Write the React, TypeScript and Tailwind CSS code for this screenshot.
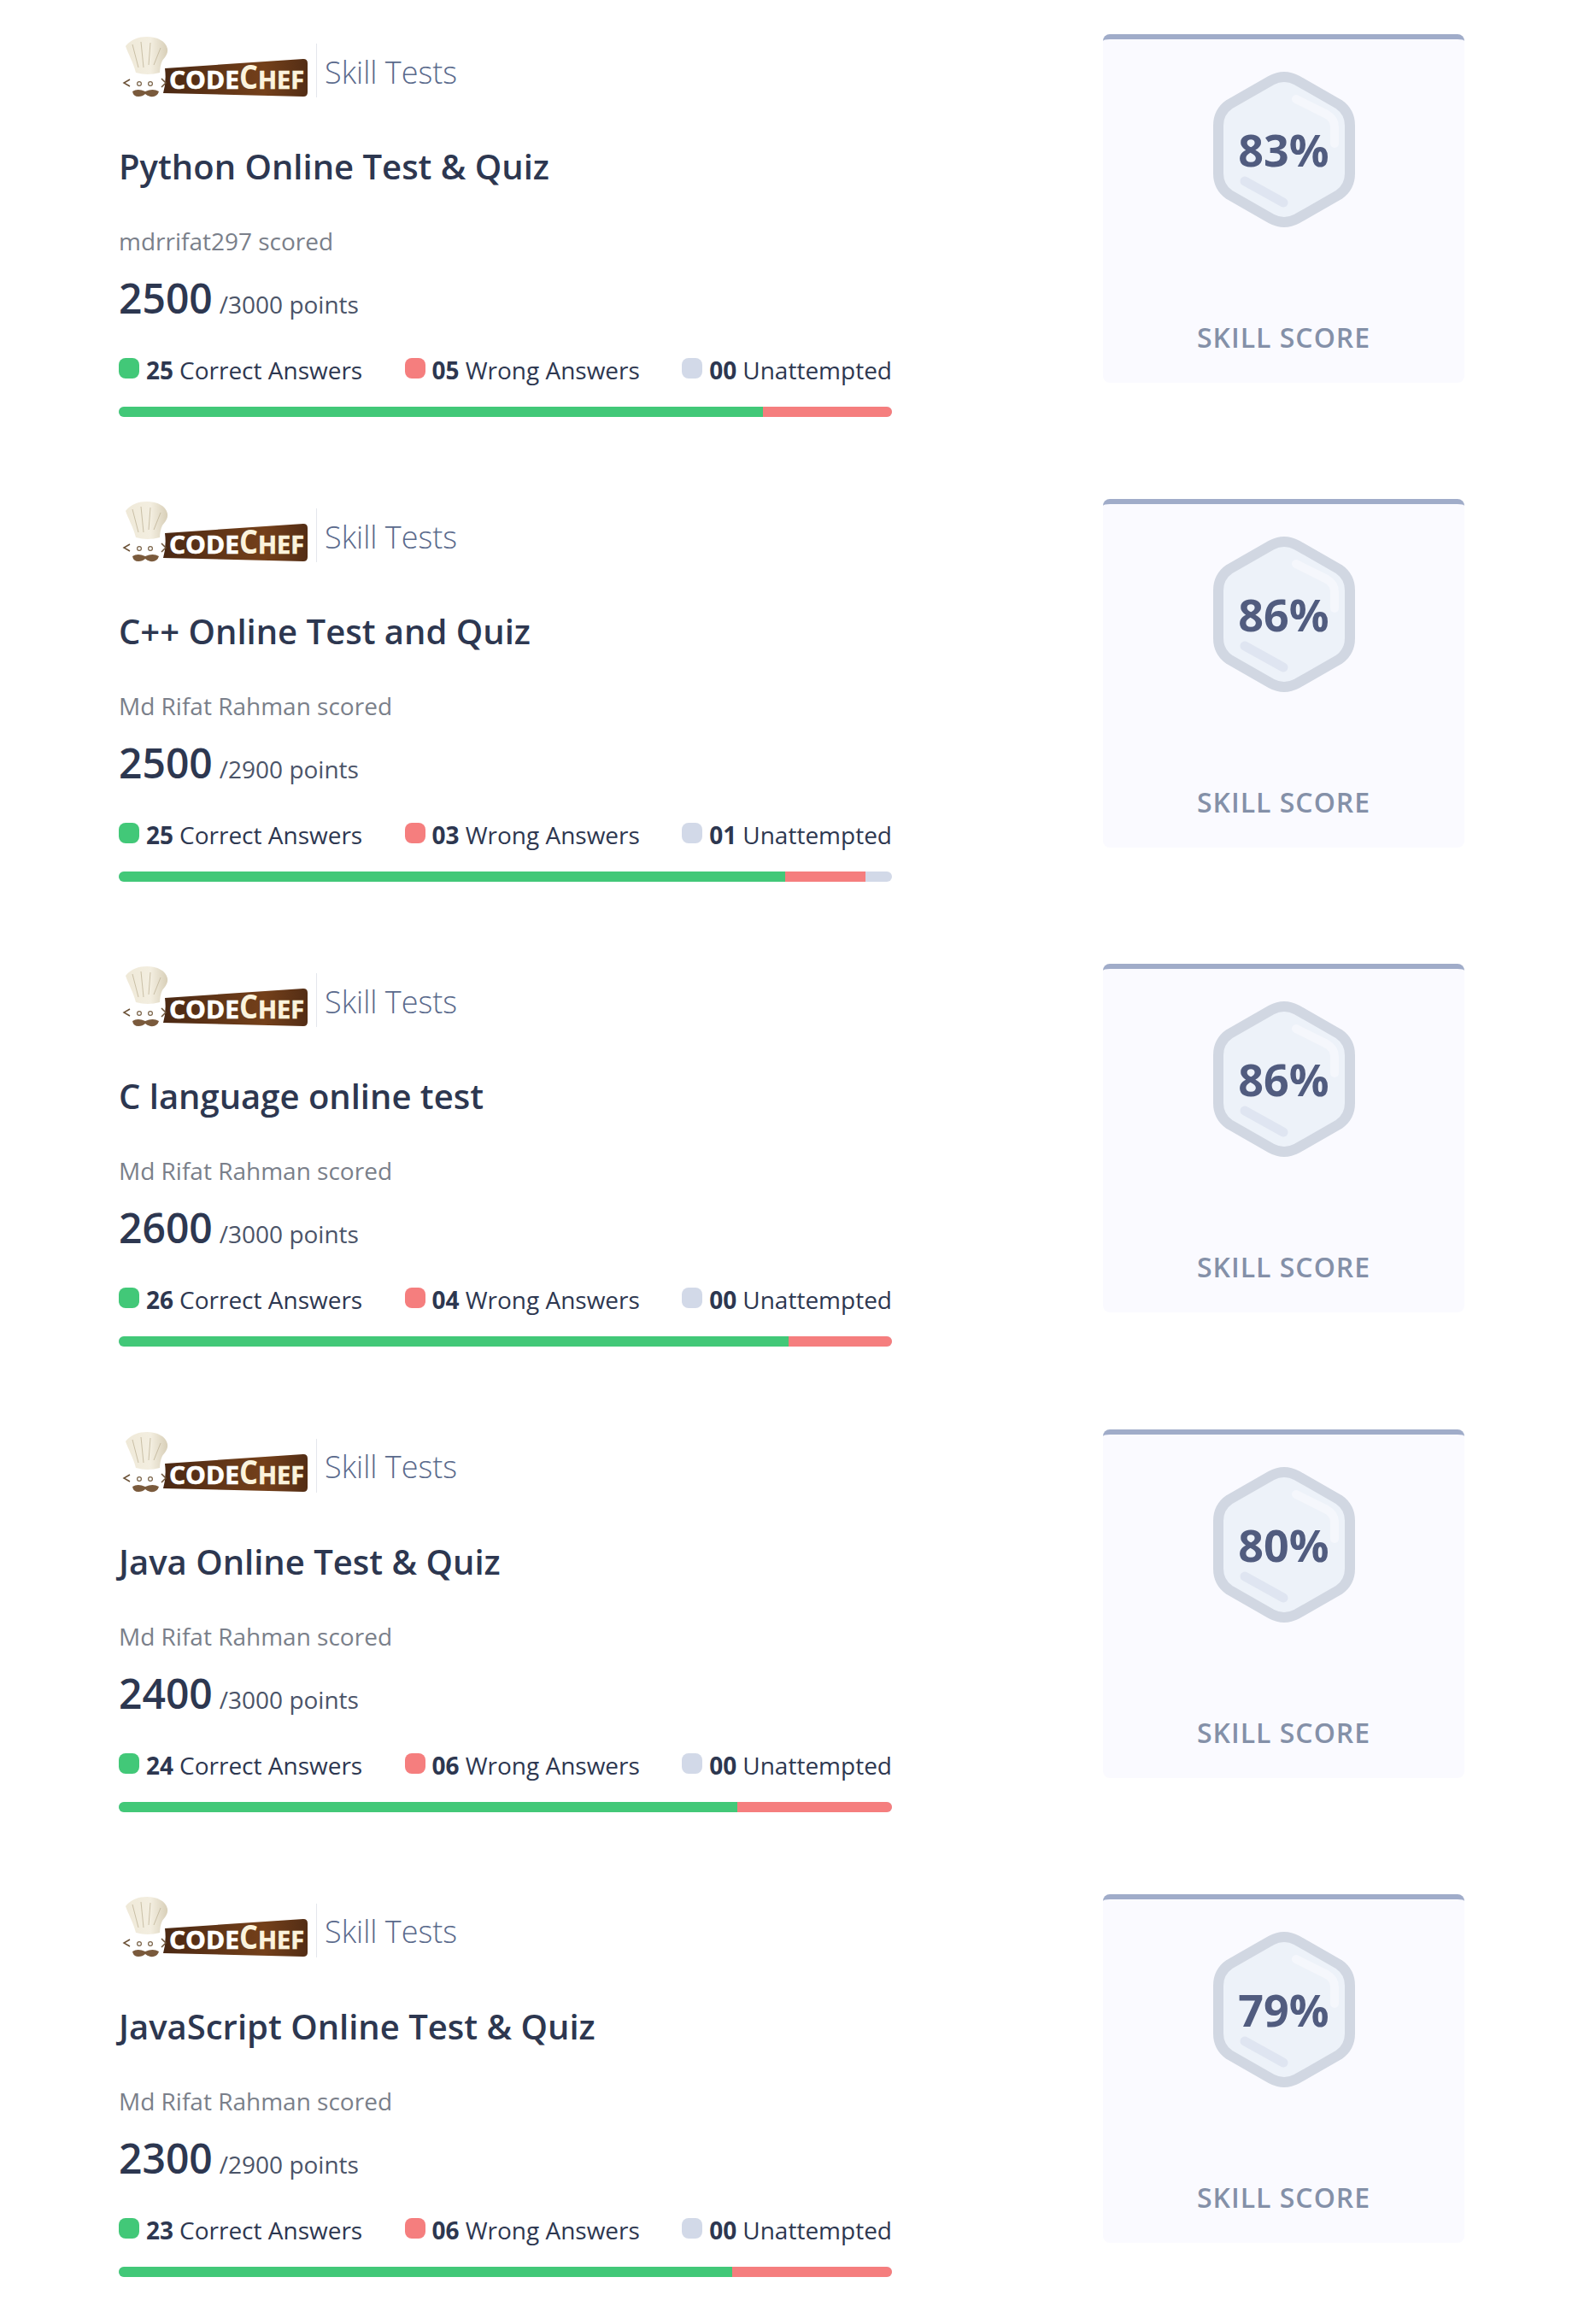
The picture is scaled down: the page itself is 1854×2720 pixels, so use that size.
const tests = [
  { title: 'Python Online Test & Quiz', user: 'mdrrifat297', score: 2500, total: 3000, correct: 25, wrong: 5, skipped: 0, pct: 83 },
  { title: 'C++ Online Test and Quiz', user: 'Md Rifat Rahman', score: 2500, total: 2900, correct: 25, wrong: 3, skipped: 1, pct: 86 },
  { title: 'C language online test', user: 'Md Rifat Rahman', score: 2600, total: 3000, correct: 26, wrong: 4, skipped: 0, pct: 86 },
  { title: 'Java Online Test & Quiz', user: 'Md Rifat Rahman', score: 2400, total: 3000, correct: 24, wrong: 6, skipped: 0, pct: 80 },
  { title: 'JavaScript Online Test & Quiz', user: 'Md Rifat Rahman', score: 2300, total: 2900, correct: 23, wrong: 6, skipped: 0, pct: 79 },
];

const pad = (n: number) => String(n).padStart(2, '0');

function Logo({ id }: { id: number }) {
  return (
    <svg width="219" height="71" viewBox="0 0 219 71" className="block shrink-0 overflow-visible">
      <defs>
        <linearGradient id={`banner-${id}`} x1="0" x2="1" y1="0" y2="0">
          <stop offset="0" stopColor="#4a2813" />
          <stop offset="0.7" stopColor="#74401a" />
          <stop offset="1" stopColor="#532d15" />
        </linearGradient>
        <linearGradient id={`hat-${id}`} x1="0" x2="1" y1="0" y2="0">
          <stop offset="0" stopColor="#efe9d8" />
          <stop offset="0.6" stopColor="#f3eee0" />
          <stop offset="1" stopColor="#d8cfb8" />
        </linearGradient>
      </defs>
      {/* banner */}
      <path d="M50 37 L212 26 Q217 26 217 31 L217 65 Q217 70 212 70 L48 66 Q52 52 50 37 Z" fill={`url(#banner-${id})`} />
      {/* hat */}
      <path d="M4 11 C10 3 20 0 29 0 C41 0 51 5 53 14 C54 20 50 24 47 28 C45 32 44 38 44 42 Q30 46 16 42 C13 30 7 20 4 11 Z" fill={`url(#hat-${id})`} />
      <path d="M12 9 L19 36 M22 6 L25 36 M33 7 L31 33 M45 13 L37 33" stroke="#bfb498" strokeWidth="0.8" fill="none" />
      {/* face */}
      <path d="M9 50 L2 54 L9 58 M46 49 L51 54 L46 59" stroke="#6b5136" strokeWidth="1.5" fill="none" />
      <circle cx="20" cy="55" r="2.4" fill="none" stroke="#7a6348" strokeWidth="1.2" />
      <circle cx="33" cy="55" r="2.4" fill="none" stroke="#7a6348" strokeWidth="1.2" />
      <path d="M12 64 Q18 60 27 64 Q36 60 43 64 Q41 71 33 70 Q29 69 27 67 Q24 70 19 70 Q13 70 12 64 Z" fill="#7a5a3c" />
      {/* wordmark */}
      <text x="55" y="61" textLength="82" lengthAdjust="spacingAndGlyphs" fontFamily="'Open Sans', sans-serif" fontWeight="700" fontSize="28" fill="#ffffff" stroke="#ffffff" strokeWidth="0.6">
        CODE
      </text>
      <text x="137" y="61" textLength="22" lengthAdjust="spacingAndGlyphs" fontFamily="'Open Sans', sans-serif" fontWeight="700" fontSize="40" fill="#fbf3dc">
        C
      </text>
      <text x="159" y="61" textLength="54" lengthAdjust="spacingAndGlyphs" fontFamily="'Open Sans', sans-serif" fontWeight="700" fontSize="28" fill="#fbf3dc" stroke="#fbf3dc" strokeWidth="0.6">
        HEF
      </text>
    </svg>
  );
}

function Badge({ pct }: { pct: number }) {
  return (
    <div className="relative mx-auto h-[184px] w-[166px]">
      <svg width="166" height="184" viewBox="0 0 166 184" className="block">
        <path
          d="M68 11 Q83 3 98 11 L147 39 Q160 48 160 64 L160 120 Q160 136 147 145 L98 173 Q83 181 68 173 L19 145 Q6 136 6 120 L6 64 Q6 48 19 39 Z"
          fill="#edf2f9"
          stroke="#d1d7e2"
          strokeWidth="12"
        />
        <path d="M97 33 L133 51 Q142 56 142 66 L142 85" fill="none" stroke="#f5f7fc" strokeWidth="10" strokeLinecap="round" />
        <path d="M37 129 L82 154" fill="none" stroke="#dfe5f1" strokeWidth="11" strokeLinecap="round" />
      </svg>
      <div className="absolute inset-0 flex items-center justify-center text-[52px] font-bold text-[#515c7f]">{pct}%</div>
    </div>
  );
}

function Legend({ color, count, label }: { color: string; count: number; label: string }) {
  return (
    <div className="flex items-center text-[#2d3750]">
      <span className={`mr-2 h-6 w-6 -translate-y-0.5 rounded-lg ${color}`} />
      <span className="mr-[7px] font-bold">{pad(count)}</span>
      <span>{label}</span>
    </div>
  );
}

export default function App() {
  return (
    <div className="min-h-[2720px] bg-white pl-[139px] font-['Open_Sans',sans-serif]">
      {tests.map((t, i) => {
        const sum = t.correct + t.wrong + t.skipped;
        return (
          <div key={t.title} className="flex h-[544.2px] pt-10">
            <div className="w-[905px]">
              <div className="flex h-[71px] translate-y-[3px] items-start pl-1">
                <Logo id={i} />
                <div className="ml-2 mt-2 flex h-[63px] items-center border-l border-[#e4e7ec] pl-[9px] pt-1 text-[36px] font-light text-[#5a6a8c]">
                  Skill Tests
                </div>
              </div>
              <h3 className="mt-[56px] text-[40px] leading-[56px] font-semibold text-[#2d3750]">{t.title}</h3>
              <p className="mt-[41px] text-[28px] leading-9 text-[#7a7f8a]">{t.user} scored</p>
              <div className="mt-[15px] flex items-baseline text-[#2d3750]">
                <span className="text-[48px] leading-[68px] font-semibold">{t.score}</span>
                <span className="ml-2 text-[28px] font-normal text-[#4b5468]">/{t.total} points</span>
              </div>
              <div className="mt-[32px] flex justify-between text-[28px] leading-9">
                <Legend color="bg-[#42c878]" count={t.correct} label="Correct Answers" />
                <Legend color="bg-[#f57e7e]" count={t.wrong} label="Wrong Answers" />
                <Legend color="bg-[#d2d9e8]" count={t.skipped} label="Unattempted" />
              </div>
              <div className="mt-[25px] flex h-3 overflow-hidden rounded-md bg-[#d2d9e8]">
                <div className="bg-[#42c878]" style={{ width: `${(t.correct / sum) * 100}%` }} />
                <div className="bg-[#f57e7e]" style={{ width: `${(t.wrong / sum) * 100}%` }} />
              </div>
            </div>
            <div className="ml-[247px] flex h-[408px] w-[423px] flex-col rounded-lg border-t-[6px] border-[#a0acc9] bg-[#fafaff]">
              <div className="mt-[37px]">
                <Badge pct={t.pct} />
              </div>
              <div className="mt-[108px] text-center text-[32px] leading-10 font-semibold tracking-[1px] text-[#8490a8]">SKILL SCORE</div>
            </div>
          </div>
        );
      })}
    </div>
  );
}
